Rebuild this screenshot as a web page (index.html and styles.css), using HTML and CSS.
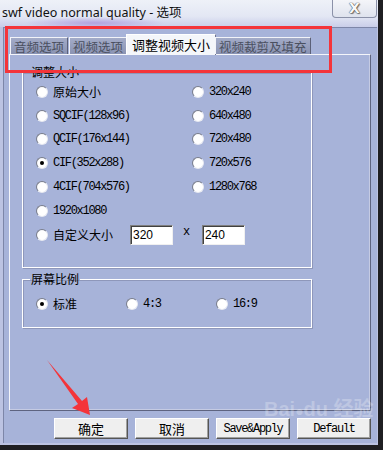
FILE: index.html
```html
<!DOCTYPE html>
<html lang="zh-CN">
<head>
    <meta charset="UTF-8">
    <title>swf video normal quality - 选项</title>
    <link rel="stylesheet" href="styles.css">
</head>
<body>

    <!-- Dialog window -->
    <div class="window">
        <div class="titlebar">
            <span class="title">swf video normal quality - 选项</span>
            <div class="close">X</div>
        </div>

        <div class="client">
            <!-- Tab strip -->
            <div class="tabs">
                <div class="tab">音频选项</div>
                <div class="tab">视频选项</div>
                <div class="tab active">调整视频大小</div>
                <div class="tab">视频裁剪及填充</div>
            </div>

            <div class="panel">
                <fieldset class="group size-group">
                    <legend>调整大小</legend>
                    <div class="size-grid">
                        <label class="opt"><span class="radio"></span><span class="cn">原始大小</span></label>
                        <label class="opt"><span class="radio"></span><span class="mono">320x240</span></label>
                        <label class="opt"><span class="radio"></span><span class="mono">SQCIF(128x96)</span></label>
                        <label class="opt"><span class="radio"></span><span class="mono">640x480</span></label>
                        <label class="opt"><span class="radio"></span><span class="mono">QCIF(176x144)</span></label>
                        <label class="opt"><span class="radio"></span><span class="mono">720x480</span></label>
                        <label class="opt"><span class="radio checked"></span><span class="mono">CIF(352x288)</span></label>
                        <label class="opt"><span class="radio"></span><span class="mono">720x576</span></label>
                        <label class="opt"><span class="radio"></span><span class="mono">4CIF(704x576)</span></label>
                        <label class="opt"><span class="radio"></span><span class="mono">1280x768</span></label>
                        <label class="opt first-col"><span class="radio"></span><span class="mono">1920x1080</span></label>
                        <div class="opt custom">
                            <span class="radio"></span><span class="cn">自定义大小</span>
                            <input class="field" type="text" value="320">
                            <span class="mono times">x</span>
                            <input class="field" type="text" value="240">
                        </div>
                    </div>
                </fieldset>

                <fieldset class="group ratio-group">
                    <legend>屏幕比例</legend>
                    <div class="ratio-row">
                        <label class="opt"><span class="radio checked"></span><span class="cn">标准</span></label>
                        <label class="opt"><span class="radio"></span><span class="mono">4:3</span></label>
                        <label class="opt"><span class="radio"></span><span class="mono">16:9</span></label>
                    </div>
                </fieldset>
            </div>

            <div class="buttons">
                <button class="btn cn">确定</button>
                <button class="btn cn">取消</button>
                <button class="btn mono">Save&amp;Apply</button>
                <button class="btn mono">Default</button>
            </div>
        </div>
    </div>

    <!-- Screenshot annotations -->
    <div class="mark-box"></div>
    <svg class="mark-arrow" width="60" height="70" viewBox="0 0 60 70">
        <polygon points="2,2 37,43 42,39 45,57 27,50 33,46" fill="#f4343a"/>
    </svg>
    <div class="watermark">Bai<span class="paw">&#9679;</span>du 经验</div>

</body>
</html>
```

FILE: styles.css
```css
* {
    box-sizing: border-box;
}
body {
    margin: 0;
    width: 383px;
    height: 450px;
    background-color: #1f1f22;
    font-family: "Noto Sans CJK SC", sans-serif;
    position: relative;
    overflow: hidden;
}
.window {
    width: 378px;
    height: 445px;
    display: flex;
    flex-direction: column;
    background-color: #bcc3e2;
    padding: 0 1px 2px 3px;
}
.titlebar {
    height: 27px;
    margin-left: -3px;
    margin-right: -1px;
    display: flex;
    justify-content: space-between;
    align-items: flex-start;
    background:
        radial-gradient(ellipse 70px 6px at 95px 23px, rgba(170, 150, 220, 0.8), transparent),
        linear-gradient(#eef1f8, #e3e7f4 60%, #c9cde9);
}
.title {
    font-family: "Noto Sans", "Noto Sans CJK SC", sans-serif;
    font-size: 12.5px;
    line-height: 14px;
    color: #111;
    padding: 6px 0 0 2px;
}
.close {
    width: 45px;
    height: 18px;
    margin-right: 1px;
    border: 1px solid #8b91a8;
    border-top: none;
    border-radius: 0 0 4px 4px;
    background: linear-gradient(#f4f5f9, #dfe3ee);
    color: #f8f8f8;
    font-family: "DejaVu Sans", sans-serif;
    font-weight: bold;
    font-size: 14px;
    line-height: 16px;
    text-align: center;
    text-shadow: 0 0 1px #444, 0 0 1px #444, 1px 1px 1px #777;
}
.client {
    flex: 1;
    background-color: #a7b3d9;
    border-top: 1px solid #7d86a8;
    border-left: 1px solid #7d86a8;
    padding-top: 6px;
    display: flex;
    flex-direction: column;
}
.tabs {
    display: flex;
    align-items: flex-end;
    height: 20px;
    margin-left: 6px;
    position: relative;
    z-index: 1;
}
.tab {
    height: 17px;
    padding: 0 3px;
    font-size: 12.5px;
    line-height: 17px;
    color: #4b5060;
    background: linear-gradient(#a3abc8, #8a93b3);
    border: 1px solid #f2f3f8;
    border-bottom: none;
    border-right-color: #5b6078;
    margin-right: 1px;
}
.tab.active {
    height: 21px;
    margin-bottom: -1px;
    margin-left: -2px;
    margin-right: -1px;
    padding: 1px 5px 0;
    font-size: 13px;
    color: #000;
    background: #f4f6fa;
    border-color: #ffffff;
    border-right-color: #6e7390;
}
.panel {
    margin-left: 5px;
    width: 362px;
    height: 357px;
    border: 1px solid #f4f5fa;
    border-right-color: #5e6480;
    border-bottom-color: #5e6480;
    box-shadow: inset -1px -1px 0 #c5cbe3;
    padding: 10px 0 0 12px;
}
.group {
    margin: 0;
    width: 290px;
    min-width: 0;
    border: 1px solid #ffffff;
    box-shadow: inset 1px 1px 0 #8e97ba, 1px 1px 0 #8e97ba;
    padding: 0 0 0 13px;
}
.group legend {
    font-size: 12px;
    line-height: 14px;
    color: #000;
    padding: 0 1px;
    margin-left: -6px;
}
.size-group {
    height: 203px;
    padding-top: 1px;
}
.size-grid {
    display: grid;
    grid-template-columns: 156px 120px;
    grid-auto-rows: 23.8px;
}
.first-col {
    grid-column: 1;
}
.opt {
    display: flex;
    align-items: center;
    gap: 5px;
    color: #000;
}
.custom {
    grid-column: 1 / -1;
}
.custom .cn {
    margin-right: 12px;
}
.cn {
    font-family: "Noto Sans CJK SC", sans-serif;
    font-size: 12px;
    line-height: 14px;
}
.mono {
    font-family: "Liberation Mono", monospace;
    font-size: 12px;
    letter-spacing: -1.3px;
    line-height: 14px;
}
.radio {
    width: 12px;
    height: 12px;
    flex: none;
    border-radius: 50%;
    background: radial-gradient(circle at 55% 55%, #ffffff 55%, #e4e6ee);
    border: 1px solid #7b7f8c;
    border-right-color: #e9ebf2;
    border-bottom-color: #e9ebf2;
    position: relative;
}
.radio.checked::after {
    content: "";
    position: absolute;
    left: 3px;
    top: 3px;
    width: 4px;
    height: 4px;
    border-radius: 50%;
    background: #000;
}
.field {
    width: 43px;
    height: 20px;
    margin: 0;
    padding: 1px 2px;
    font-family: "Liberation Sans", sans-serif;
    font-size: 12px;
    color: #000;
    background: #fff;
    border: 1px solid #7f7f7f;
    border-right-color: #f0f0f0;
    border-bottom-color: #f0f0f0;
    box-shadow: inset 1px 1px 0 #404040;
    outline: none;
}
.times {
    margin: -6px 8px 0 5px;
}
.ratio-group {
    margin-top: 4px;
    height: 56px;
    padding-top: 6px;
}
.ratio-row {
    display: grid;
    grid-template-columns: 90px 90px 90px;
    height: 24px;
}
.buttons {
    display: flex;
    gap: 7px;
    margin: 7px 0 0 50px;
}
.btn {
    width: 74px;
    height: 21px;
    padding: 0;
    background: #efefef;
    color: #000;
    border: 1px solid #ffffff;
    border-right-color: #555;
    border-bottom-color: #555;
    box-shadow: inset -1px -1px 0 #a0a0a0;
}
.btn.cn {
    font-size: 13px;
}
.btn.mono {
    font-size: 12px;
}
.mark-box {
    position: absolute;
    left: 5px;
    top: 26px;
    width: 327px;
    height: 47px;
    border: 3px solid #f4343a;
}
.mark-arrow {
    position: absolute;
    left: 45px;
    top: 358px;
}
.watermark {
    position: absolute;
    left: 264px;
    top: 393px;
    font-family: "Liberation Sans", "Noto Sans CJK SC", sans-serif;
    font-size: 20px;
    font-weight: bold;
    color: rgba(255, 255, 255, 0.25);
    white-space: nowrap;
}
.paw {
    font-size: 14px;
}
```
